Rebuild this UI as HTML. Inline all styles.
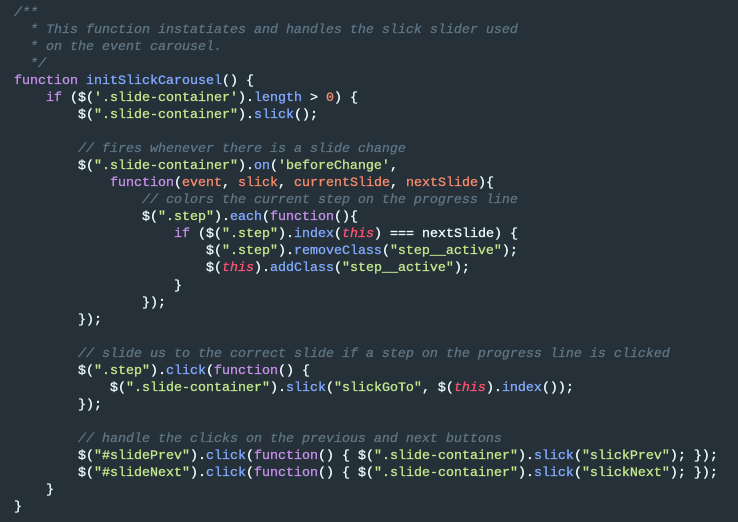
<!DOCTYPE html>
<html><head><style>
html,body{margin:0;padding:0;background:#263039;width:738px;height:522px;overflow:hidden}
pre{margin:0;position:absolute;left:14px;top:5px;font-family:"Liberation Mono",monospace;font-size:13.33px;line-height:17.03px;color:#eeffff;-webkit-text-stroke:0.3px}
.c{color:#5f7584;font-style:italic}
.k{color:#c792ea}
.s{color:#c3e88d}
.m{color:#82aaff}
.p{color:#f78c6c}
.t{color:#ff5370;font-style:italic}
.n{color:#f78c6c}
</style></head><body><pre><span class="c">/**
  * This function instatiates and handles the slick slider used
  * on the event carousel.
  */</span>
<span class="k">function</span> <span class="m">initSlickCarousel</span>() {
    <span class="k">if</span> ($(<span class="s">'.slide-container'</span>).<span class="m">length</span> &gt; <span class="n">0</span>) {
        $(<span class="s">".slide-container"</span>).<span class="m">slick</span>();

        <span class="c">// fires whenever there is a slide change</span>
        $(<span class="s">".slide-container"</span>).<span class="m">on</span>(<span class="s">'beforeChange'</span>,
            <span class="k">function</span>(<span class="p">event</span>, <span class="p">slick</span>, <span class="p">currentSlide</span>, <span class="p">nextSlide</span>){
                <span class="c">// colors the current step on the progress line</span>
                $(<span class="s">".step"</span>).<span class="m">each</span>(<span class="k">function</span>(){
                    <span class="k">if</span> ($(<span class="s">".step"</span>).<span class="m">index</span>(<span class="t">this</span>) === nextSlide) {
                        $(<span class="s">".step"</span>).<span class="m">removeClass</span>(<span class="s">"step__active"</span>);
                        $(<span class="t">this</span>).<span class="m">addClass</span>(<span class="s">"step__active"</span>);
                    }
                });
        });

        <span class="c">// slide us to the correct slide if a step on the progress line is clicked</span>
        $(<span class="s">".step"</span>).<span class="m">click</span>(<span class="k">function</span>() {
            $(<span class="s">".slide-container"</span>).<span class="m">slick</span>(<span class="s">"slickGoTo"</span>, $(<span class="t">this</span>).<span class="m">index</span>());
        });

        <span class="c">// handle the clicks on the previous and next buttons</span>
        $(<span class="s">"#slidePrev"</span>).<span class="m">click</span>(<span class="k">function</span>() { $(<span class="s">".slide-container"</span>).<span class="m">slick</span>(<span class="s">"slickPrev"</span>); });
        $(<span class="s">"#slideNext"</span>).<span class="m">click</span>(<span class="k">function</span>() { $(<span class="s">".slide-container"</span>).<span class="m">slick</span>(<span class="s">"slickNext"</span>); });
    }
}</pre></body></html>
